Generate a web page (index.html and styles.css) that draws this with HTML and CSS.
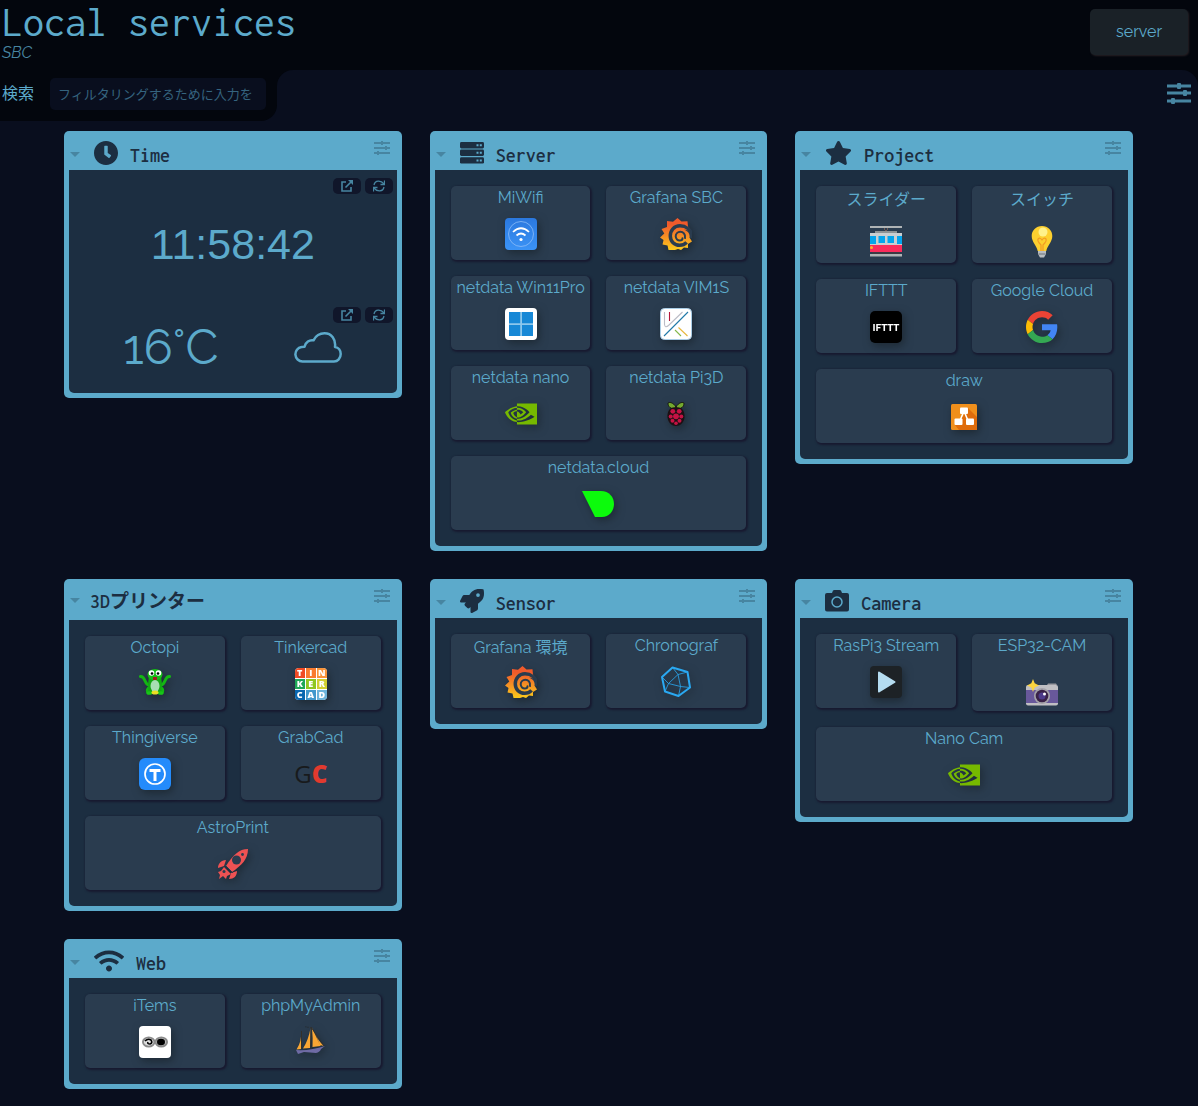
FILE: index.html
```html
<!DOCTYPE html>
<html lang="ja">
<head>
<meta charset="utf-8">
<meta name="viewport" content="width=device-width, initial-scale=1">
<title>Local services</title>
<link rel="stylesheet" href="styles.css">
</head>
<body>
<svg class="sprite" aria-hidden="true">
  <defs>
    <linearGradient id="fire" x1="0" y1="0" x2="0" y2="1"><stop offset="0.2" stop-color="#f05a2b"/><stop offset="1" stop-color="#fbca1c"/></linearGradient>
    <linearGradient id="sky" x1="0" y1="0" x2="0" y2="1"><stop offset="0" stop-color="#2b78de"/><stop offset="1" stop-color="#3b93f6"/></linearGradient>
  </defs>
  <symbol id="sliders" viewBox="0 0 24 22"><path d="M0 4h24M0 11h24M0 19h24" stroke="currentColor" stroke-width="3"/><g fill="currentColor"><rect x="10" y="1" width="4" height="6" rx="1"/><rect x="16" y="8" width="4" height="6" rx="1"/><rect x="4" y="16" width="4" height="6" rx="1"/></g></symbol>
  <symbol id="sliders-thin" viewBox="0 0 16 14"><path d="M0 2h16M0 7h16M0 12h16" stroke="currentColor" stroke-width="2"/><path d="M7 0h2v4H7zM11 5h2v4h-2zM3 10h2v4H3z" fill="currentColor"/></symbol>
  <symbol id="caret" viewBox="0 0 10 5"><path d="M0 0h10L5 5z" fill="currentColor"/></symbol>
  <symbol id="open" viewBox="0 0 12 12"><path d="M5 2H1v9h9V7M4.500 7.500L10 2" fill="none" stroke="currentColor" stroke-width="1.600"/><path d="M7 0h5v5z" fill="currentColor"/></symbol>
  <symbol id="refresh" viewBox="0 0 12 12"><path d="M1 5C2 0 8 0 11 4M11 7C10 12 4 12 1 8" fill="none" stroke="currentColor" stroke-width="1.300"/><path d="M11.500.5v4h-4M.5 11.500v-4h4" fill="none" stroke="currentColor" stroke-width="1.300"/></symbol>
  <symbol id="clock" viewBox="8 8 496 496"><path fill="currentColor" d="M256 8C119 8 8 119 8 256s111 248 248 248 248-111 248-248S393 8 256 8zm57.1 350.1L224.9 294c-3.1-2.3-4.9-5.9-4.9-9.7V116c0-6.6 5.4-12 12-12h48c6.6 0 12 5.4 12 12v137.700l63.500 46.200c5.400 3.900 6.500 11.400 2.600 16.800l-28.200 38.800c-3.900 5.300-11.400 6.500-16.800 2.600z"/></symbol>
  <symbol id="server" viewBox="0 0 24 24"><g fill="currentColor"><rect y="1" width="24" height="6.400" rx="1.400"/><rect y="8.600" width="24" height="6.400" rx="1.400"/><rect y="16.200" width="24" height="6.400" rx="1.400"/></g><path d="M16.500 4.200h2M19.800 4.200h2M16.500 11.800h2M19.800 11.800h2M16.500 19.400h2M19.800 19.400h2" stroke="#5caacb" stroke-width="2"/></symbol>
  <symbol id="star" viewBox="0 0 576 512"><path fill="currentColor" d="M259.3 17.8L194 150.2 47.9 171.5c-26.2 3.8-36.7 36.1-17.7 54.6l105.7 103-25 145.5c-4.5 26.3 23.2 46 46.4 33.7L288 439.6l130.7 68.7c23.2 12.2 50.9-7.4 46.4-33.7l-25-145.5 105.7-103c19-18.5 8.5-50.8-17.7-54.6L382 150.2 316.7 17.8c-11.7-23.6-45.6-23.9-57.4 0z"/></symbol>
  <symbol id="rocket" viewBox="0 0 512 512"><path fill="currentColor" d="M505.120 19.094c-1.189-5.531-6.658-11-12.207-12.188C460.716 0 435.507 0 410.407 0 307.175 0 245.269 55.203 199.052 128H94.838c-16.348.016-35.557 11.875-42.887 26.484L2.516 253.297A28.400 28.400 0 0 0 0 264a24 24 0 0 0 24 24h103.816l-22.474 22.469c-11.365 11.361-12.996 32.258 0 45.250l50.904 50.906c11.156 11.188 32.156 13.156 45.277 0l22.475-22.469V488a24 24 0 0 0 24.006 24 28.559 28.559 0 0 0 10.707-2.516l98.728-49.390c14.629-7.297 26.508-26.500 26.508-42.860V312.797c72.598-46.313 128.035-108.406 128.035-211.094 0-25.203 0-50.406-6.862-82.609ZM384.040 168A40 40 0 1 1 424.050 128 40 40 0 0 1 384.040 168Z"/></symbol>
  <symbol id="camera" viewBox="0 0 24 24"><path fill="currentColor" d="M2 4h5l1-2.500Q8.500 1 9.500 1h5q1 0 1.500.5L17 4h5q2 0 2 2v14.500q0 2-2 2H2q-2 0-2-2V6q0-2 2-2z"/><circle cx="12" cy="13" r="5" fill="none" stroke="#5caacb" stroke-width="1.500"/></symbol>
  <symbol id="wifi" viewBox="0 0 640 512"><path fill="currentColor" d="M634.91 154.88C457.74-8.990 182.190-8.930 5.090 154.880c-6.660 6.160-6.790 16.590-.35 22.980l34.240 33.970c6.140 6.100 16.020 6.230 22.400.38 145.920-133.680 371.300-133.710 517.250 0 6.380 5.850 16.260 5.710 22.400-.38l34.240-33.970c6.430-6.390 6.300-16.820-.36-22.980zM320 352c-35.350 0-64 28.650-64 64s28.650 64 64 64 64-28.650 64-64-28.650-64-64-64zm202.670-83.590c-115.260-101.930-290.210-101.820-405.340 0-6.900 6.100-7.120 16.690-.57 23.150l34.440 33.990c6 5.920 15.660 6.320 22.050.8 83.950-72.570 209.740-72.410 293.490 0 6.390 5.520 16.050 5.130 22.050-.8l34.440-33.990c6.560-6.460 6.330-17.060-.56-23.150z"/></symbol>
  <symbol id="cloud" viewBox="0 0 48 31"><path d="M8.500 29.500a7.300 7.300 0 0 1-1-14.500q1.500-.3 3-.3c1-4.500 5-7.200 9-6.400C22 3.500 26 1.300 30.500 1.300c7 0 11.500 6 10.500 13.700 3.500.5 5.700 3.500 5.700 7 0 4.200-3 7.500-6.700 7.500z" fill="none" stroke="currentColor" stroke-width="2.500" stroke-linejoin="round"/></symbol>
  <symbol id="grafana" viewBox="0 0 32 32">
    <path fill="url(#fire)" d="M17.500 0l4 3.500 6-.3.500 5.300c3 3 4 6 3.800 10l-2 1.500 2.200 3.500-4 2.500v4l-4-.5-3 2.500-3-1-3 1h-6.500l-1-4.500-5-1 1-4.500L0 19.500l4.300-4L1.500 11l5.500-2V3l6 .700z"/>
    <path fill="none" stroke="#2a3c4f" stroke-width="3.500" d="M33 19C31 11.500 25.500 7.800 20 7.800 14 7.800 10.300 12.500 10.300 18c0 5.400 4.200 9.300 9.300 9.300 3 0 5.400-1.200 7-3"/>
    <path fill="#2a3c4f" d="M24 11.500c5 2 6 5 5.500 8.500L34 20 31 13z"/>
    <path fill="none" stroke="#2a3c4f" stroke-width="2" stroke-linecap="round" d="M25 20c.6-3.800-1.800-6.200-4.700-6.200-2.700 0-4.600 2.100-4.600 4.500 0 2.700 2.100 4.300 4.200 4.200 1.600 0 2.600-1 2.600-2.200"/>
  </symbol>
  <symbol id="miwifi" viewBox="0 0 32 32"><rect width="32" height="32" rx="4" fill="url(#sky)"/><circle cx="16" cy="16" r="12.500" fill="none" stroke="#8dbcf8" stroke-width=".8"/><g fill="none" stroke="#fff" stroke-width="1.700"><path d="M8 14q8-7.500 16 0M11.500 17.500q4.500-4 9 0"/></g><circle cx="16" cy="21.500" r="1.600" fill="#fff"/></symbol>
  <symbol id="windows" viewBox="0 0 32 32"><rect width="32" height="32" rx="4" fill="#fff"/><path d="M4 4h24v24H4z" fill="#8cc7ec"/><path d="M4 4h11.200v11.200H4zM17 4h11v11.200H17zM4 17h11.200v11H4zM17 17h11v11H17z" fill="#1788d6"/></symbol>
  <symbol id="vim" viewBox="0 0 32 32"><rect x=".5" y=".5" width="31" height="31" rx="4" fill="#fff" stroke="#a9cde6"/><g fill="none" stroke-width="1.100"><path d="M4.500 4v12.500q.5 4 4 1L22.500 4" stroke="#bbbcc6"/><path d="M4 28L28 4" stroke="#1f78a8"/><path d="M9.500 4v9" stroke="#b5173b"/><path d="M18.500 19.500l9 8.500" stroke="#e7b73c"/><path d="M15 22l6 6" stroke="#84b84b"/></g></symbol>
  <symbol id="nvidia" viewBox="0 0 24 24"><path fill="#76b900" d="M8.948 8.798v-1.430a6.700 6.700 0 0 1 .424-.018c3.922-.124 6.493 3.374 6.493 3.374s-2.774 3.851-5.750 3.851c-.398 0-.787-.062-1.158-.185v-4.346c1.528.185 1.837.857 2.747 2.385l2.040-1.714s-1.492-1.952-4-1.952a6.016 6.016 0 0 0-.796.035m0-4.735v2.138l.424-.027c5.450-.185 9.010 4.470 9.010 4.470s-4.080 4.964-8.330 4.964c-.37 0-.733-.035-1.095-.097v1.325c.3.035.61.062.91.062 3.957 0 6.820-2.023 9.593-4.408.459.371 2.340 1.263 2.730 1.652-2.633 2.208-8.772 3.984-12.253 3.984-.335 0-.653-.018-.971-.053v1.864H24V4.063zm0 10.326v1.131c-3.657-.654-4.673-4.460-4.673-4.460s1.758-1.944 4.673-2.262v1.237H8.940c-1.528-.186-2.730 1.245-2.730 1.245s.68 2.412 2.739 3.110M2.456 10.900s2.164-3.197 6.500-3.533V6.201C4.153 6.590 0 10.653 0 10.653s2.350 6.802 8.948 7.420v-1.237c-4.840-.6-6.492-5.936-6.492-5.936z"/></symbol>
  <symbol id="raspberry" viewBox="0 0 32 32"><path d="M16 9C13 4 9 4 8 5c0 4 3 6 7 6zM16 9c3-5 7-5 8-4 0 4-3 6-7 6z" fill="#74a92f" stroke="#17180f"/><path d="M16 9.500c6-1 9 4 8.500 10-.5 5-4.500 8.500-8.500 8.500s-8-3.500-8.500-8.500C7 13.500 10 8.500 16 9.500z" fill="#1d1014"/><g fill="#c51244"><circle cx="16" cy="18.300" r="2.900"/><circle cx="12.800" cy="13.300" r="2.400"/><circle cx="19.200" cy="13.300" r="2.400"/><circle cx="10.700" cy="18.500" r="2"/><circle cx="21.300" cy="18.500" r="2"/><circle cx="12.500" cy="22.800" r="2"/><circle cx="19.500" cy="22.800" r="2"/><circle cx="16" cy="25.300" r="1.800"/></g></symbol>
  <symbol id="netdata" viewBox="0 0 32 32"><path fill="#0cfb0c" d="M0 3h19c8 0 13 6 13 13s-5 13-12 13h-7z"/></symbol>
  <symbol id="tram" viewBox="0 0 32 32"><path d="M14 3l2-2 2 2-2 2z" fill="none" stroke="#705954"/><path d="M0 0h32v2H0zM0 28h32v2.500H0z" fill="#aeb3b5"/><path d="M5 5h22v2H5z" fill="#8d9295"/><path d="M0 7h32v12H0z" fill="#c9ced1"/><path d="M0 19h32v7H0z" fill="#fa2b5b"/><path d="M2 26h28v2H2z" fill="#3b3a43"/><path d="M0 10h6v8H0zM8.500 10h6.500v7H8.500zM17.500 10H24v7h-6.500zM27 10h5v8h-5z" fill="#04a4ec"/><circle cx="1.500" cy="21.500" r="1.500" fill="#ffb02e"/></symbol>
  <symbol id="bulb" viewBox="0 0 32 32"><path d="M12 24h8v4l-2 3.500h-4L12 28z" fill="#b7bcc0"/><path d="M12.500 28h7" stroke="#6d7378"/><path d="M16 0c6 0 10.300 4.500 10.300 10 0 6-5 9.500-6 15h-8.600c-1-5.500-6-9-6-15C5.700 4.500 10 0 16 0z" fill="#fdd02f"/><circle cx="17" cy="6" r="4.500" fill="#fff18a"/><path d="M12 13q2-2 4 1 2-3 4-1 1 2-3 6v6M12 13q-1 2 3 6v6" fill="none" stroke="#f39b23" stroke-width="1.200"/></symbol>
  <symbol id="google" viewBox="0 0 48 48"><path fill="#ea4335" d="M24 9.500c3.540 0 6.710 1.220 9.210 3.600l6.850-6.850C35.900 2.380 30.470 0 24 0 14.620 0 6.510 5.380 2.560 13.220l7.980 6.190C12.430 13.720 17.740 9.500 24 9.500z"/><path fill="#4285f4" d="M46.980 24.550c0-1.570-.15-3.090-.38-4.550H24v9.020h12.940c-.58 2.960-2.260 5.480-4.780 7.180l7.730 6c4.510-4.180 7.090-10.360 7.090-17.650z"/><path fill="#fbbc05" d="M10.530 28.590c-.48-1.450-.76-2.990-.76-4.590s.27-3.140.76-4.590l-7.980-6.190C.92 16.460 0 20.120 0 24c0 3.880.92 7.540 2.560 10.780l7.970-6.190z"/><path fill="#34a853" d="M24 48c6.480 0 11.930-2.130 15.890-5.810l-7.730-6c-2.150 1.450-4.920 2.300-8.160 2.300-6.260 0-11.570-4.220-13.470-9.910l-7.980 6.190C6.510 42.620 14.620 48 24 48z"/></symbol>
  <symbol id="drawio" viewBox="0 0 32 32"><rect x="3" y="3" width="26" height="26" rx="1.500" fill="#f08f1b"/><path d="M20 7l9 9v13H11l-4-5 9-10z" fill="#df6c0c"/><path d="M16 10l-5 12M16 10l5 12" stroke="#fff" stroke-width="1.600"/><g fill="#fff"><rect x="12" y="6.500" width="8" height="6.500" rx="1"/><rect x="6.500" y="17.500" width="8" height="6.500" rx="1"/><rect x="18" y="17.500" width="8" height="6.500" rx="1"/></g></symbol>
  <symbol id="octopi" viewBox="0 0 32 32"><g fill="none" stroke="#13b613" stroke-width="3" stroke-linecap="round"><path d="M11 17C5 18 7 8 1.500 8.500M21 17c6 1 4-9 9.500-8.500M11 19q-4 2-2 6M21 19q4 2 2 6"/></g><path d="M10 8h12l1 8-1 10H10L9 16z" fill="#12a812"/><ellipse cx="16" cy="6.500" rx="7.500" ry="5.500" fill="#16bd16"/><ellipse cx="16" cy="18" rx="4.500" ry="6" fill="#a6dfb4"/><circle cx="12.500" cy="5" r="2.800" fill="#fff"/><circle cx="19.500" cy="5" r="2.800" fill="#fff"/><circle cx="13" cy="5.500" r="1.300"/><circle cx="19" cy="5.500" r="1.300"/><path d="M14 9h4v3h-4z" fill="#a02020"/><ellipse cx="10.500" cy="25" rx="3" ry="1.800" fill="#18c518"/><ellipse cx="21.500" cy="25" rx="3" ry="1.800" fill="#18c518"/><ellipse cx="16" cy="24.500" rx="3.500" ry="2" fill="#eadf24"/></symbol>
  <symbol id="thingiverse" viewBox="0 0 32 32"><rect width="32" height="32" rx="6" fill="#248bfb"/><circle cx="16" cy="16" r="10" fill="none" stroke="#fff" stroke-width="1.700"/><path d="M10.500 11h11v3h-4v9h-3v-9h-4z" fill="#fff"/></symbol>
  <symbol id="astroprint" viewBox="0 0 32 32"><g fill="#ee5253"><path d="M31 1c-9 0-15 6-22 17l6 6C25 17 31 11 31 1z"/><path d="M9 12c-5 0-8 4-8 8l6-2zM20 23c0 5-3 8-8 8l2-6z"/><path d="M7 19l7 7-4 2-1 3-3-3-4 3 1-4-2-3 3-1z"/></g><circle cx="19.500" cy="12" r="4.500" fill="#2a3c4f"/><circle cx="25.500" cy="6.500" r="1.400" fill="#2a3c4f"/><path d="M8 17l8 8" stroke="#2a3c4f"/><circle cx="7" cy="23.500" r="1.500" fill="#2a3c4f"/></symbol>
  <symbol id="chronograf" viewBox="0 0 32 32"><g fill="none" stroke="#2aa9f2" stroke-linejoin="round"><path stroke-width="2" d="M12.500 1.500L27.500 6 30 21.500 18.500 30 5 25.500 2 11z"/><path stroke-width=".8" d="M18 8.500L8.500 17.500 20.500 20.500zM12.500 1.500L18 8.500 27.500 6M2 11l6.500 6.500L5 25.500M18.500 30l2-9.500L30 21.500"/></g></symbol>
  <symbol id="play" viewBox="0 0 32 32"><rect width="32" height="32" rx="4" fill="#1d2226"/><path d="M9 6.500L24.500 16 9 25.500z" fill="#b5dcf0" stroke="#b5dcf0" stroke-width="2" stroke-linejoin="round"/></symbol>
  <symbol id="flashcam" viewBox="0 0 32 32"><path d="M21 6l1-1.500h8l1 1.500z" fill="#9a9aa0"/><rect y="6" width="32" height="20.500" rx="2" fill="#c0bfc3"/><path d="M0 11h32v13H0z" fill="#68589b"/><circle cx="16" cy="17" r="8" fill="#a5a3a9"/><circle cx="16" cy="17" r="6.300" fill="#3a2248"/><circle cx="16" cy="17" r="3.500" fill="#4d3b8a"/><circle cx="18.500" cy="15" r="1.500" fill="#fff"/><path d="M7 0l1.700 4.300L13 6.500l-4.300 2L7 13 5.300 8.500 1 6.500l4.300-2.200z" fill="#fcd53f"/></symbol>
  <symbol id="items" viewBox="0 0 32 32"><rect width="32" height="32" rx="4" fill="#fff"/><g stroke="#8a8a8a" stroke-width="1.800"><ellipse cx="9.700" cy="16" rx="5.800" ry="4.600" fill="#ddd"/><ellipse cx="22.300" cy="16" rx="5.800" ry="4.600" fill="#bbb"/></g><ellipse cx="22" cy="16" rx="4" ry="3.200"/><path d="M6 15q3-3 6-1 2 3-1 4-3 0-2-2" fill="none" stroke="#000" stroke-width="1.600"/></symbol>
  <symbol id="sail" viewBox="0 0 32 32"><path d="M6 6q1 9-4.500 17.500l4.500-.5zM15.500 2q-2 12-7.500 20.500l7-.5zM17 2q1 10 .5 19l8-1zM20 7q3 8 9 13l-4-1z" fill="#f9a633"/><path d="M6.500 5v18M16 1v21M16 1l13 19" stroke="#33312c"/><path d="M1 24q14 1 29-4l-4 3q-1 3-5 4l-12-1-6 2z" fill="#6f6ba5"/><path d="M10 1q1.500-1 2 .5 1-1 2 0" stroke="#27313a" fill="none"/></symbol>
</svg>

<header class="top">
  <div>
    <h1 class="top__title">Local services</h1>
    <p class="top__sub">SBC</p>
  </div>
  <button class="top__button" type="button">server</button>
</header>

<div class="toolbar">
  <form class="search">
    <label for="filter">検索</label>
    <input id="filter" type="text" placeholder="フィルタリングするために入力を">
  </form>
  <div class="options"><div class="options__panel">
    <button class="icon-button" type="button" aria-label="Settings"><svg class="options__icon"><use href="#sliders"/></svg></button>
  </div></div>
</div>

<main class="board">
  <section class="card">
    <header class="card__head">
      <button class="icon-button card__toggle" type="button" aria-label="Collapse"><svg><use href="#caret"/></svg></button>
      <svg class="card__icon"><use href="#clock"/></svg>
      <h2>Time</h2>
      <button class="icon-button card__options" type="button" aria-label="Options"><svg><use href="#sliders-thin"/></svg></button>
    </header>
    <div class="card__widgets">
      <div class="widget">
        <div class="widget__tools">
          <button type="button" aria-label="Open"><svg><use href="#open"/></svg></button>
          <button type="button" aria-label="Refresh"><svg><use href="#refresh"/></svg></button>
        </div>
        <time class="clock">11:58:42</time>
      </div>
      <div class="widget">
        <div class="widget__tools">
          <button type="button" aria-label="Open"><svg><use href="#open"/></svg></button>
          <button type="button" aria-label="Refresh"><svg><use href="#refresh"/></svg></button>
        </div>
        <div class="weather"><span>16°C</span><svg><use href="#cloud"/></svg></div>
      </div>
    </div>
  </section>

  <section class="card">
    <header class="card__head">
      <button class="icon-button card__toggle" type="button" aria-label="Collapse"><svg><use href="#caret"/></svg></button>
      <svg class="card__icon"><use href="#server"/></svg>
      <h2>Server</h2>
      <button class="icon-button card__options" type="button" aria-label="Options"><svg><use href="#sliders-thin"/></svg></button>
    </header>
    <div class="tiles">
      <a class="tile" href="#">MiWifi<svg><use href="#miwifi"/></svg></a>
      <a class="tile" href="#">Grafana SBC<svg><use href="#grafana"/></svg></a>
      <a class="tile" href="#">netdata Win11Pro<svg><use href="#windows"/></svg></a>
      <a class="tile" href="#">netdata VIM1S<svg><use href="#vim"/></svg></a>
      <a class="tile" href="#">netdata nano<svg><use href="#nvidia"/></svg></a>
      <a class="tile" href="#">netdata Pi3D<svg><use href="#raspberry"/></svg></a>
      <a class="tile tile--wide" href="#">netdata.cloud<svg><use href="#netdata"/></svg></a>
    </div>
  </section>

  <section class="card">
    <header class="card__head">
      <button class="icon-button card__toggle" type="button" aria-label="Collapse"><svg><use href="#caret"/></svg></button>
      <svg class="card__icon card__icon--star"><use href="#star"/></svg>
      <h2>Project</h2>
      <button class="icon-button card__options" type="button" aria-label="Options"><svg><use href="#sliders-thin"/></svg></button>
    </header>
    <div class="tiles">
      <a class="tile tile--emoji tile--cjk" href="#">スライダー<svg><use href="#tram"/></svg></a>
      <a class="tile tile--emoji tile--cjk" href="#">スイッチ<svg><use href="#bulb"/></svg></a>
      <a class="tile" href="#">IFTTT<svg viewBox="0 0 32 32"><rect width="32" height="32" rx="5"/><text class="mark mark--ifttt" x="16" y="20" text-anchor="middle">IFTTT</text></svg></a>
      <a class="tile" href="#">Google Cloud<svg><use href="#google"/></svg></a>
      <a class="tile tile--wide" href="#">draw<svg><use href="#drawio"/></svg></a>
    </div>
  </section>

  <section class="card">
    <header class="card__head card__head--plain">
      <button class="icon-button card__toggle" type="button" aria-label="Collapse"><svg><use href="#caret"/></svg></button>
      <h2>3D<span class="kana">プリンター</span></h2>
      <button class="icon-button card__options" type="button" aria-label="Options"><svg><use href="#sliders-thin"/></svg></button>
    </header>
    <div class="tiles">
      <a class="tile" href="#">Octopi<svg><use href="#octopi"/></svg></a>
      <a class="tile" href="#">Tinkercad<span class="blocks"><b>T</b><b>I</b><b>N</b><b>K</b><b>E</b><b>R</b><b>C</b><b>A</b><b>D</b></span></a>
      <a class="tile" href="#">Thingiverse<svg><use href="#thingiverse"/></svg></a>
      <a class="tile" href="#">GrabCad<span class="grabcad">G<b>C</b></span></a>
      <a class="tile tile--wide" href="#">AstroPrint<svg><use href="#astroprint"/></svg></a>
    </div>
  </section>

  <section class="card">
    <header class="card__head">
      <button class="icon-button card__toggle" type="button" aria-label="Collapse"><svg><use href="#caret"/></svg></button>
      <svg class="card__icon"><use href="#rocket"/></svg>
      <h2>Sensor</h2>
      <button class="icon-button card__options" type="button" aria-label="Options"><svg><use href="#sliders-thin"/></svg></button>
    </header>
    <div class="tiles">
      <a class="tile tile--cjk" href="#">Grafana 環境<svg><use href="#grafana"/></svg></a>
      <a class="tile" href="#">Chronograf<svg><use href="#chronograf"/></svg></a>
    </div>
  </section>

  <section class="card">
    <header class="card__head">
      <button class="icon-button card__toggle" type="button" aria-label="Collapse"><svg><use href="#caret"/></svg></button>
      <svg class="card__icon"><use href="#camera"/></svg>
      <h2>Camera</h2>
      <button class="icon-button card__options" type="button" aria-label="Options"><svg><use href="#sliders-thin"/></svg></button>
    </header>
    <div class="tiles">
      <a class="tile" href="#">RasPi3 Stream<svg><use href="#play"/></svg></a>
      <a class="tile tile--emoji" href="#">ESP32-CAM<svg viewBox="0 -5 32 32"><use href="#flashcam" width="32" height="32"/></svg></a>
      <a class="tile tile--wide" href="#">Nano Cam<svg><use href="#nvidia"/></svg></a>
    </div>
  </section>

  <section class="card">
    <header class="card__head">
      <button class="icon-button card__toggle" type="button" aria-label="Collapse"><svg><use href="#caret"/></svg></button>
      <svg class="card__icon card__icon--wifi"><use href="#wifi"/></svg>
      <h2>Web</h2>
      <button class="icon-button card__options" type="button" aria-label="Options"><svg><use href="#sliders-thin"/></svg></button>
    </header>
    <div class="tiles">
      <a class="tile" href="#">iTems<svg><use href="#items"/></svg></a>
      <a class="tile" href="#">phpMyAdmin<svg><use href="#sail"/></svg></a>
    </div>
  </section>
</main>
</body>
</html>
```
FILE: styles.css
```css
:root {
  --accent: #5caacb;
  --muted: #4785a1;
  --page: #090e1e;
  --black: #03060d;
  --panel: #1c2e41;
  --tile: #2a3c4f;
  --sans: Raleway, Lato, "Noto Sans CJK JP", sans-serif;
  --mono: Inconsolata, "DejaVu Sans Mono", "Noto Sans CJK JP", monospace;
}

* { box-sizing: border-box; }

body {
  margin: 0;
  background: var(--page);
  color: var(--accent);
  font: 400 16px/24px var(--sans);
}

svg { display: block; }
.sprite { position: absolute; width: 0; height: 0; }

h1, h2, p { margin: 0; }
button { font: inherit; color: inherit; border: 0; cursor: pointer; }
.icon-button { padding: 0; background: none; color: var(--muted); }

.top {
  display: flex;
  justify-content: space-between;
  align-items: flex-start;
  min-height: 70px;
  padding: 0 10px 0 2px;
  background: var(--black);
}
.top__title { font: 400 42px/44px var(--mono); }
.top__sub { line-height: 18px; font-style: italic; color: var(--muted); }
.top__button {
  margin-top: 9px;
  padding: 11px 26px;
  border-radius: 5px;
  background: #1a2127;
  box-shadow: 1px 1px 2px #262024;
}

.toolbar { display: flex; }
.search {
  display: flex;
  align-items: center;
  gap: 16px;
  padding: 8px 11px 11px 2px;
  background: var(--black);
  border-bottom-right-radius: 16px;
}
.search input {
  width: 216px;
  height: 32px;
  padding: 0 8px 2px;
  border: 0;
  border-radius: 5px;
  background: var(--page);
  color: var(--accent);
  font: 400 13px "Noto Sans CJK JP", sans-serif;
}
.search input::placeholder { color: #35647f; opacity: 1; }
.options { flex: 1; background: linear-gradient(var(--black), var(--black)) top / 100% 16px no-repeat; }
.options__panel {
  display: flex;
  justify-content: flex-end;
  align-items: flex-start;
  height: 100%;
  padding: 12px 7px 0;
  background: var(--page);
  border-radius: 16px 16px 0 0;
}
.options__icon { width: 24px; height: 22px; }

.board {
  display: grid;
  grid-template-columns: repeat(3, minmax(0, 1fr));
  align-items: start;
  gap: 28px;
  padding: 10px 65px 16px 64px;
}

.card {
  padding: 0 5px 5px;
  border-radius: 5px;
  background: var(--accent);
}
.card__head {
  display: flex;
  align-items: flex-end;
  height: 39px;
  padding: 0 7px 5px 1px;
  color: var(--panel);
}
.card__head--plain { height: 41px; padding-bottom: 9px; }
.card__head h2 { font: 600 20px/18px var(--mono); }
.card__head .kana { font-size: 19px; font-weight: 700; }
.card__toggle { padding-bottom: 8px; margin-right: 14px; }
.card__head--plain .card__toggle { margin-right: 10px; }
.card__toggle svg { width: 10px; height: 5px; }
.card__icon { width: 24px; height: 24px; margin-right: 12px; }
.card__icon--star { width: 27px; }
.card__icon--wifi { width: 30px; }
.card__options { align-self: flex-start; margin: 10px 0 0 auto; }
.card__options svg { width: 16px; height: 14px; }

.card__widgets,
.tiles {
  background: var(--panel);
  border-radius: 0 0 5px 5px;
}
.tiles {
  display: grid;
  grid-template-columns: repeat(2, minmax(0, 1fr));
  align-items: start;
  gap: 16px;
  padding: 16px;
}
.tile {
  display: flex;
  flex-direction: column;
  align-items: center;
  gap: 8px;
  height: 74px;
  border-radius: 5px;
  background: var(--tile);
  box-shadow: 1px 1px 2px 1px #181a30;
  color: inherit;
  white-space: nowrap;
  text-decoration: none;
}
.tile svg,
.blocks { flex: none; width: 32px; height: 32px; filter: drop-shadow(2px 3px 4px rgb(20 28 34 / 60%)); }
.tile--wide { grid-column: 1 / -1; }
.tile--cjk { padding-top: 2px; gap: 6px; }
.tile--emoji { gap: 16px; height: 77px; }
.tile--emoji.tile--cjk { gap: 14px; }
.tile--emoji svg { filter: none; }

.card__widgets { padding-bottom: 22px; }
.widget { padding: 8px 4px 0; }
.widget__tools { display: flex; justify-content: flex-end; gap: 4px; }
.widget__tools button {
  display: grid;
  place-items: center;
  width: 28px;
  height: 16px;
  padding: 0;
  border-radius: 5px;
  background: #10162a;
  color: var(--muted);
}
.widget__tools svg { width: 12px; height: 12px; }
.clock {
  display: block;
  padding: 20px 0 25px;
  text-align: center;
  font: 400 43px/60px "DSEG7 Classic", "Digital-7", "DS-Digital", "Liberation Sans", sans-serif;
}
.weather {
  display: flex;
  justify-content: center;
  align-items: center;
  gap: 76px;
  font-size: 48px;
  line-height: 48px;
}
.weather svg { width: 48px; height: 31px; }

.mark { fill: #fff; }
.mark--ifttt { font: 900 10px Lato, sans-serif; }
.blocks {
  display: grid;
  grid-template-columns: repeat(3, 10px);
  gap: 1px;
  border-radius: 4px;
  background: #fff;
  color: #fff;
  font: 700 9px/10px "Open Sans", sans-serif;
  text-align: center;
}
.blocks b:nth-child(1) { background: #f04a24; border-top-left-radius: 4px; }
.blocks b:nth-child(2) { background: #f97b2f; }
.blocks b:nth-child(3) { background: #f9943a; border-top-right-radius: 4px; }
.blocks b:nth-child(4) { background: #1fa757; }
.blocks b:nth-child(5) { background: #90c720; }
.blocks b:nth-child(6) { background: #d2cf32; }
.blocks b:nth-child(7) { background: #0967b0; border-bottom-left-radius: 4px; }
.blocks b:nth-child(8) { background: #4298cc; }
.blocks b:nth-child(9) { background: #6cb3da; border-bottom-right-radius: 4px; }
.grabcad {
  color: #181a1c;
  font: 400 24px/32px "Open Sans", sans-serif;
}
.grabcad b { font-weight: 800; color: #e23a2e; }
```
